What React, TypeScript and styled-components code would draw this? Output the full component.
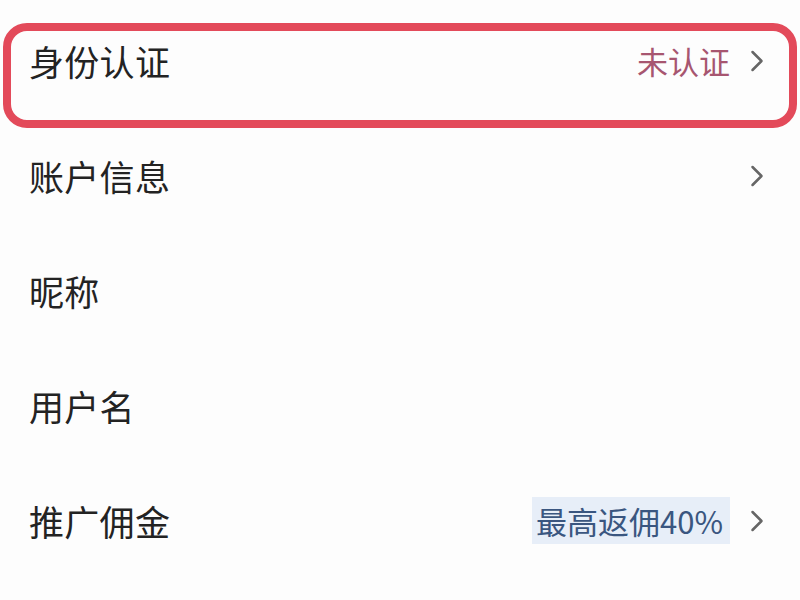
import React from 'react'
import styled, { createGlobalStyle } from 'styled-components'

const GlobalStyle = createGlobalStyle`
  html, body {
    margin: 0;
    padding: 0;
    background: #fdfdfd;
  }
  body {
    font-family: "Noto Sans CJK SC", "Noto Sans", sans-serif;
  }
`

const Page = styled.div`
  width: 800px;
  height: 600px;
  overflow: hidden;
  background: #fdfdfd;
  padding-top: 3px;
  box-sizing: border-box;
`

const List = styled.div`
  display: flex;
  flex-direction: column;
`

const Row = styled.div`
  position: relative;
  height: 115px;
  display: flex;
  align-items: center;
  justify-content: space-between;
  padding: 0 36px 0 29px;
  box-sizing: border-box;
`

// the red marker someone drew around the first row
const Highlight = styled.div`
  position: absolute;
  left: 3px;
  right: 3px;
  top: 20px;
  height: 105px;
  border: 8px solid #e34a5a;
  border-radius: 24px;
  box-sizing: border-box;
  pointer-events: none;
`

const Label = styled.div`
  font-size: 35px;
  color: #232323;
  letter-spacing: 0.3px;
  line-height: 1;
`

const Right = styled.div`
  display: flex;
  align-items: center;
  gap: 20px;
`

const Status = styled.span`
  font-size: 31px;
  color: #a75670;
  line-height: 1;
`

const Badge = styled.span`
  display: flex;
  align-items: center;
  height: 47px;
  padding: 0 7px 0 4px;
  background: #e7eef8;
  color: #3a5680;
  font-size: 31px;
  line-height: 1;
`

const Chevron = () => (
  <svg width="14" height="22" viewBox="0 0 14 22">
    <path d="M2.5 2 L11.5 11 L2.5 20" fill="none" stroke="#666" strokeWidth="2.5" strokeLinecap="round" strokeLinejoin="round" />
  </svg>
)

const App = () => {
  return (
    <Page>
      <GlobalStyle />
      <List>
        <Row>
          <Label>身份认证</Label>
          <Right>
            <Status>未认证</Status>
            <Chevron />
          </Right>
          <Highlight />
        </Row>
        <Row>
          <Label>账户信息</Label>
          <Chevron />
        </Row>
        <Row>
          <Label>昵称</Label>
        </Row>
        <Row>
          <Label>用户名</Label>
        </Row>
        <Row>
          <Label>推广佣金</Label>
          <Right>
            <Badge>最高返佣40%</Badge>
            <Chevron />
          </Right>
        </Row>
      </List>
    </Page>
  )
}

export default App
